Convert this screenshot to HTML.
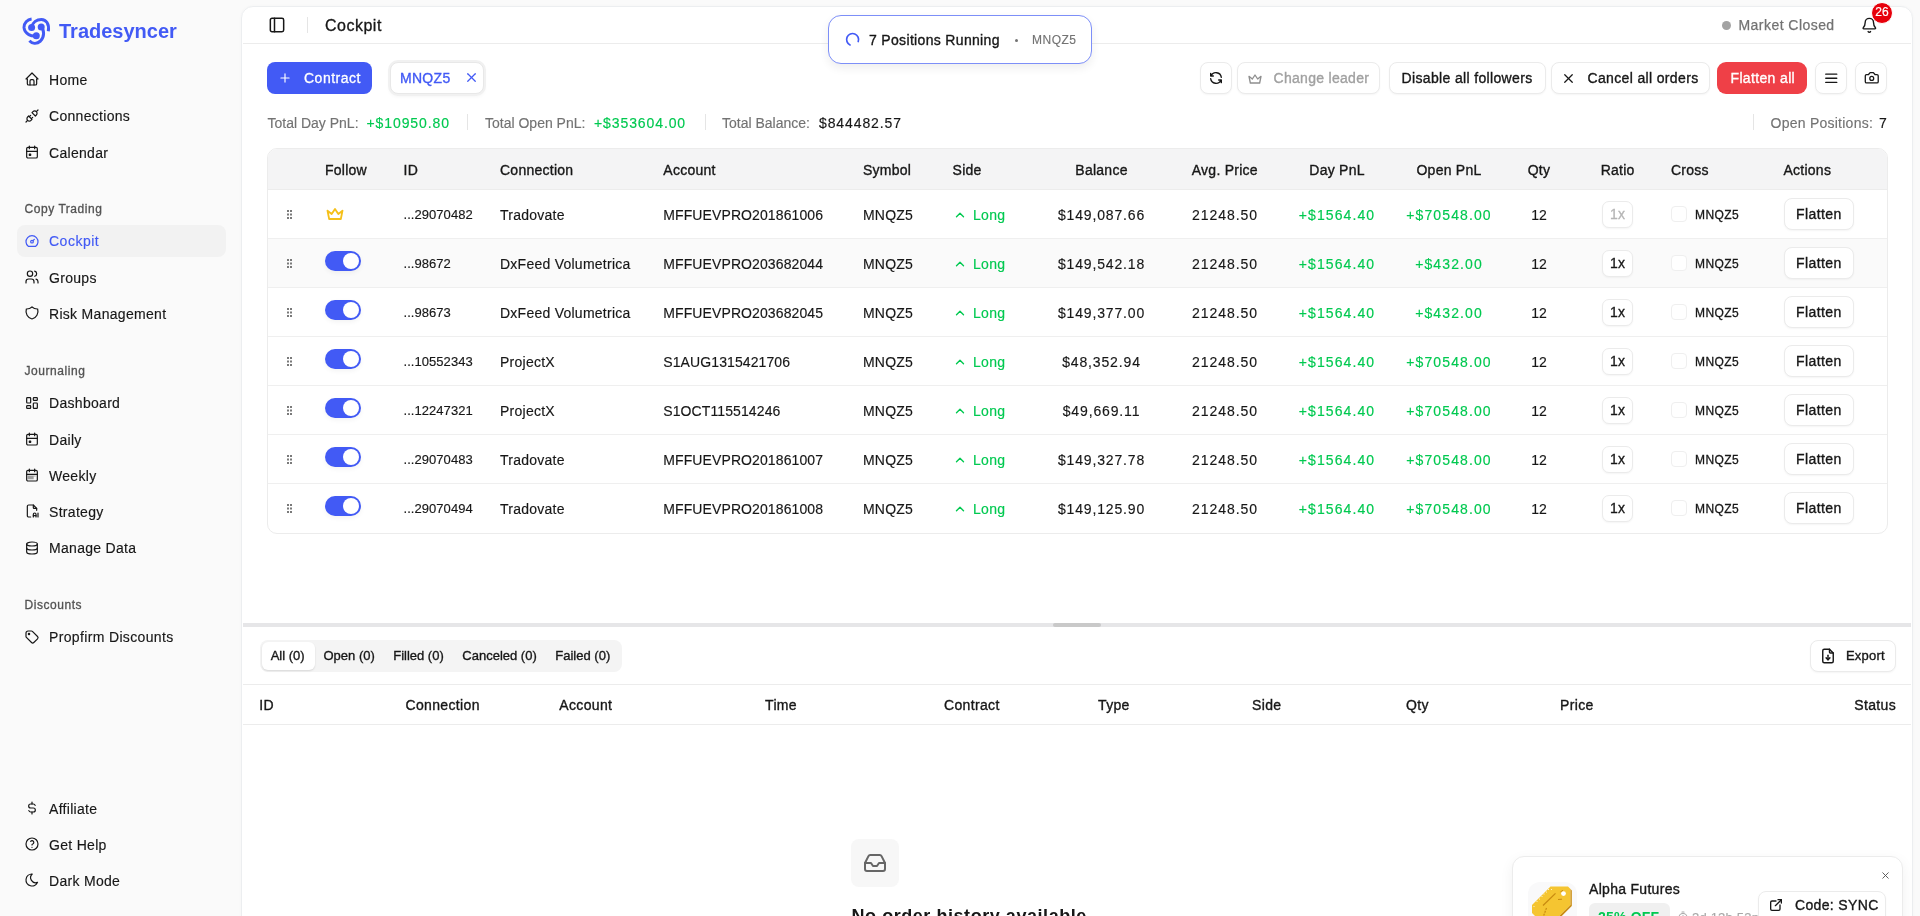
<!DOCTYPE html><html><head><meta charset="utf-8"><title>Cockpit</title><style>
*{box-sizing:border-box;margin:0;padding:0}
html,body{width:1920px;height:916px;overflow:hidden;background:#fafafa;font-family:"Liberation Sans",sans-serif;color:#171717}
.ab{position:absolute}
.t{white-space:nowrap;}
.ab svg{display:block}
.btn{position:absolute;background:#fff;border:1px solid #ebebeb;border-radius:8px;box-shadow:0 1px 2px rgba(0,0,0,0.045)}
.med{-webkit-text-stroke:0.25px currentColor}
</style></head><body><div style="position:absolute;left:0;top:0;width:1920px;height:916px;overflow:hidden;will-change:transform">
<div class="ab" style="left:18px;top:14px;width:36px;height:36px"><svg width="36" height="36" viewBox="0 0 36 36" fill="none" stroke="#425af5" stroke-width="3" stroke-linecap="butt"><path d="M18.3 21.8 C 14 22.6, 6.6 20.5, 6 13.4 C 5.8 9, 9.5 5.3, 13.6 4.9"/><path d="M13.6 13.4 C 14.5 8, 19 5.4, 23.4 5.4 C 28 5.5, 31.5 9.5, 30.3 17.3"/><path d="M23.2 13 C 26.5 16, 26.5 23, 22.5 27 C 18.5 30.5, 14 29.5, 11.4 26.7"/><circle cx="13.6" cy="13.4" r="3.5" fill="#425af5" stroke="none"/><circle cx="23.2" cy="13" r="3.5" fill="#425af5" stroke="none"/><circle cx="18.3" cy="21.8" r="3.5" fill="#425af5" stroke="none"/></svg></div>
<div class="ab t " style="left:59px;top:21.0px;font-size:20px;line-height:20px;color:#425af5;font-weight:700;">Tradesyncer</div>
<div class="ab" style="left:24px;top:71.2px;width:16px;height:16px;color:#171717"><svg width="16" height="16" viewBox="0 0 24 24" fill="none" stroke="currentColor" stroke-width="1.8" stroke-linecap="round" stroke-linejoin="round" ><path d="M5 12l-2 0l9 -9l9 9l-2 0"/><path d="M5 12v7a2 2 0 0 0 2 2h10a2 2 0 0 0 2 -2v-7"/><path d="M9 21v-6a2 2 0 0 1 2 -2h2a2 2 0 0 1 2 2v6"/></svg></div>
<div class="ab t " style="left:49px;top:69.7px;font-size:14px;line-height:20px;color:#171717;letter-spacing:0.3px;-webkit-text-stroke:0.15px currentColor;">Home</div>
<div class="ab" style="left:24px;top:107.8px;width:16px;height:16px;color:#171717"><svg width="16" height="16" viewBox="0 0 24 24" fill="none" stroke="currentColor" stroke-width="1.8" stroke-linecap="round" stroke-linejoin="round" ><path d="M7 12l5 5l-1.5 1.5a3.536 3.536 0 1 1 -5 -5l1.5 -1.5z"/><path d="M17 12l-5 -5l1.5 -1.5a3.536 3.536 0 1 1 5 5l-1.5 1.5z"/><path d="M3 21l2.5 -2.5"/><path d="M18.5 5.5l2.5 -2.5"/><path d="M10 11l-2 2"/><path d="M13 14l-2 2"/></svg></div>
<div class="ab t " style="left:49px;top:106.3px;font-size:14px;line-height:20px;color:#171717;letter-spacing:0.3px;-webkit-text-stroke:0.15px currentColor;">Connections</div>
<div class="ab" style="left:24px;top:144.1px;width:16px;height:16px;color:#171717"><svg width="16" height="16" viewBox="0 0 24 24" fill="none" stroke="currentColor" stroke-width="1.8" stroke-linecap="round" stroke-linejoin="round" ><path d="M4 7a2 2 0 0 1 2 -2h12a2 2 0 0 1 2 2v12a2 2 0 0 1 -2 2h-12a2 2 0 0 1 -2 -2z"/><path d="M16 3l0 4"/><path d="M8 3l0 4"/><path d="M4 11l16 0"/><path d="M8 15h2v2h-2z"/></svg></div>
<div class="ab t " style="left:49px;top:142.6px;font-size:14px;line-height:20px;color:#171717;letter-spacing:0.3px;-webkit-text-stroke:0.15px currentColor;">Calendar</div>
<div class="ab t " style="left:24.5px;top:198.75px;font-size:12px;line-height:20px;color:#525252;letter-spacing:0.55px;-webkit-text-stroke:0.3px currentColor;">Copy Trading</div>
<div class="ab" style="left:17px;top:225px;width:209px;height:32px;background:#f2f2f2;border-radius:8px"></div>
<div class="ab" style="left:24px;top:232.75px;width:16px;height:16px;color:#425af5"><svg width="16" height="16" viewBox="0 0 24 24" fill="none" stroke="currentColor" stroke-width="1.8" stroke-linecap="round" stroke-linejoin="round" ><path d="M12 13m-2 0a2 2 0 1 0 4 0a2 2 0 1 0 -4 0"/><path d="M13.45 11.55l2.05 -2.05"/><path d="M6.4 20a9 9 0 1 1 11.2 0z"/></svg></div>
<div class="ab t " style="left:49px;top:231.25px;font-size:14px;line-height:20px;color:#425af5;letter-spacing:0.5px;-webkit-text-stroke:0.15px currentColor;">Cockpit</div>
<div class="ab" style="left:24px;top:269.2px;width:16px;height:16px;color:#171717"><svg width="16" height="16" viewBox="0 0 24 24" fill="none" stroke="currentColor" stroke-width="1.8" stroke-linecap="round" stroke-linejoin="round" ><path d="M9 7m-4 0a4 4 0 1 0 8 0a4 4 0 1 0 -8 0"/><path d="M3 21v-2a4 4 0 0 1 4 -4h4a4 4 0 0 1 4 4v2"/><path d="M16 3.13a4 4 0 0 1 0 7.75"/><path d="M21 21v-2a4 4 0 0 0 -3 -3.85"/></svg></div>
<div class="ab t " style="left:49px;top:267.7px;font-size:14px;line-height:20px;color:#171717;letter-spacing:0.3px;-webkit-text-stroke:0.15px currentColor;">Groups</div>
<div class="ab" style="left:24px;top:305.4px;width:16px;height:16px;color:#171717"><svg width="16" height="16" viewBox="0 0 24 24" fill="none" stroke="currentColor" stroke-width="1.8" stroke-linecap="round" stroke-linejoin="round" ><path d="M12 3a12 12 0 0 0 8.5 3a12 12 0 0 1 -8.5 15a12 12 0 0 1 -8.5 -15a12 12 0 0 0 8.5 -3"/></svg></div>
<div class="ab t " style="left:49px;top:303.9px;font-size:14px;line-height:20px;color:#171717;letter-spacing:0.3px;-webkit-text-stroke:0.15px currentColor;">Risk Management</div>
<div class="ab t " style="left:24.5px;top:360.5px;font-size:12px;line-height:20px;color:#525252;letter-spacing:0.55px;-webkit-text-stroke:0.3px currentColor;">Journaling</div>
<div class="ab" style="left:24px;top:394.7px;width:16px;height:16px;color:#171717"><svg width="16" height="16" viewBox="0 0 24 24" fill="none" stroke="currentColor" stroke-width="1.8" stroke-linecap="round" stroke-linejoin="round" ><path d="M5 4h4a1 1 0 0 1 1 1v6a1 1 0 0 1 -1 1h-4a1 1 0 0 1 -1 -1v-6a1 1 0 0 1 1 -1"/><path d="M5 16h4a1 1 0 0 1 1 1v2a1 1 0 0 1 -1 1h-4a1 1 0 0 1 -1 -1v-2a1 1 0 0 1 1 -1"/><path d="M15 12h4a1 1 0 0 1 1 1v6a1 1 0 0 1 -1 1h-4a1 1 0 0 1 -1 -1v-6a1 1 0 0 1 1 -1"/><path d="M15 4h4a1 1 0 0 1 1 1v2a1 1 0 0 1 -1 1h-4a1 1 0 0 1 -1 -1v-2a1 1 0 0 1 1 -1"/></svg></div>
<div class="ab t " style="left:49px;top:393.2px;font-size:14px;line-height:20px;color:#171717;letter-spacing:0.3px;-webkit-text-stroke:0.15px currentColor;">Dashboard</div>
<div class="ab" style="left:24px;top:431.0px;width:16px;height:16px;color:#171717"><svg width="16" height="16" viewBox="0 0 24 24" fill="none" stroke="currentColor" stroke-width="1.8" stroke-linecap="round" stroke-linejoin="round" ><path d="M4 7a2 2 0 0 1 2 -2h12a2 2 0 0 1 2 2v12a2 2 0 0 1 -2 2h-12a2 2 0 0 1 -2 -2z"/><path d="M16 3l0 4"/><path d="M8 3l0 4"/><path d="M4 11l16 0"/><path d="M8 15h2v2h-2z"/></svg></div>
<div class="ab t " style="left:49px;top:429.5px;font-size:14px;line-height:20px;color:#171717;letter-spacing:0.3px;-webkit-text-stroke:0.15px currentColor;">Daily</div>
<div class="ab" style="left:24px;top:467.0px;width:16px;height:16px;color:#171717"><svg width="16" height="16" viewBox="0 0 24 24" fill="none" stroke="currentColor" stroke-width="1.8" stroke-linecap="round" stroke-linejoin="round" ><path d="M4 7a2 2 0 0 1 2 -2h12a2 2 0 0 1 2 2v12a2 2 0 0 1 -2 2h-12a2 2 0 0 1 -2 -2z"/><path d="M16 3v4"/><path d="M8 3v4"/><path d="M4 11h16"/><rect x="5.5" y="12.8" width="9" height="5.6" fill="currentColor" stroke="none" opacity="0.4"/><rect x="14.5" y="12.8" width="3" height="1.6" fill="currentColor" stroke="none" opacity="0.3"/></svg></div>
<div class="ab t " style="left:49px;top:465.5px;font-size:14px;line-height:20px;color:#171717;letter-spacing:0.3px;-webkit-text-stroke:0.15px currentColor;">Weekly</div>
<div class="ab" style="left:24px;top:503.2px;width:16px;height:16px;color:#171717"><svg width="16" height="16" viewBox="0 0 24 24" fill="none" stroke="currentColor" stroke-width="1.8" stroke-linecap="round" stroke-linejoin="round" ><path d="M14 3v4a1 1 0 0 0 1 1h4"/><path d="M10 21h-3a2 2 0 0 1 -2 -2v-14a2 2 0 0 1 2 -2h7l5 5v3"/><path d="M14 21v-4a2 2 0 1 1 4 0v4"/><path d="M14 19h4"/><path d="M21 15v6"/></svg></div>
<div class="ab t " style="left:49px;top:501.7px;font-size:14px;line-height:20px;color:#171717;letter-spacing:0.3px;-webkit-text-stroke:0.15px currentColor;">Strategy</div>
<div class="ab" style="left:24px;top:539.6px;width:16px;height:16px;color:#171717"><svg width="16" height="16" viewBox="0 0 24 24" fill="none" stroke="currentColor" stroke-width="1.8" stroke-linecap="round" stroke-linejoin="round" ><path d="M12 6m-8 0a8 3 0 1 0 16 0a8 3 0 1 0 -16 0"/><path d="M4 6v6a8 3 0 0 0 16 0v-6"/><path d="M4 12v6a8 3 0 0 0 16 0v-6"/></svg></div>
<div class="ab t " style="left:49px;top:538.1px;font-size:14px;line-height:20px;color:#171717;letter-spacing:0.3px;-webkit-text-stroke:0.15px currentColor;">Manage Data</div>
<div class="ab t " style="left:24.5px;top:594.5px;font-size:12px;line-height:20px;color:#525252;letter-spacing:0.55px;-webkit-text-stroke:0.3px currentColor;">Discounts</div>
<div class="ab" style="left:24px;top:628.5px;width:16px;height:16px;color:#171717"><svg width="16" height="16" viewBox="0 0 24 24" fill="none" stroke="currentColor" stroke-width="1.8" stroke-linecap="round" stroke-linejoin="round" ><path d="M7.5 7.5m-1 0a1 1 0 1 0 2 0a1 1 0 1 0 -2 0"/><path d="M3 6v5.172a2 2 0 0 0 .586 1.414l7.71 7.71a2.41 2.41 0 0 0 3.408 0l5.592 -5.592a2.41 2.41 0 0 0 0 -3.408l-7.71 -7.71a2 2 0 0 0 -1.414 -.586h-5.172a3 3 0 0 0 -3 3z"/></svg></div>
<div class="ab t " style="left:49px;top:627.0px;font-size:14px;line-height:20px;color:#171717;letter-spacing:0.35px;-webkit-text-stroke:0.15px currentColor;">Propfirm Discounts</div>
<div class="ab" style="left:24px;top:800.1px;width:16px;height:16px;color:#171717"><svg width="16" height="16" viewBox="0 0 24 24" fill="none" stroke="currentColor" stroke-width="1.8" stroke-linecap="round" stroke-linejoin="round" ><path d="M16.7 8a3 3 0 0 0 -2.7 -2h-4a3 3 0 0 0 0 6h4a3 3 0 0 1 0 6h-4a3 3 0 0 1 -2.7 -2"/><path d="M12 3v3m0 12v3"/></svg></div>
<div class="ab t " style="left:49px;top:798.6px;font-size:14px;line-height:20px;color:#171717;letter-spacing:0.3px;-webkit-text-stroke:0.15px currentColor;">Affiliate</div>
<div class="ab" style="left:24px;top:836.1px;width:16px;height:16px;color:#171717"><svg width="16" height="16" viewBox="0 0 24 24" fill="none" stroke="currentColor" stroke-width="1.8" stroke-linecap="round" stroke-linejoin="round" ><path d="M12 12m-9 0a9 9 0 1 0 18 0a9 9 0 1 0 -18 0"/><path d="M12 17l0 .01"/><path d="M12 13.5a1.5 1.5 0 0 1 1 -1.5a2.6 2.6 0 1 0 -3 -4"/></svg></div>
<div class="ab t " style="left:49px;top:834.6px;font-size:14px;line-height:20px;color:#171717;letter-spacing:0.3px;-webkit-text-stroke:0.15px currentColor;">Get Help</div>
<div class="ab" style="left:24px;top:872.2px;width:16px;height:16px;color:#171717"><svg width="16" height="16" viewBox="0 0 24 24" fill="none" stroke="currentColor" stroke-width="1.8" stroke-linecap="round" stroke-linejoin="round" ><path d="M12 3c.132 0 .263 0 .393 0a7.5 7.5 0 0 0 7.92 12.446a9 9 0 1 1 -8.313 -12.454z"/></svg></div>
<div class="ab t " style="left:49px;top:870.7px;font-size:14px;line-height:20px;color:#171717;letter-spacing:0.3px;-webkit-text-stroke:0.15px currentColor;">Dark Mode</div>
<div class="ab" style="left:241px;top:6px;width:1672px;height:940px;background:#fff;border:1px solid #eceef0;border-radius:12px;box-shadow:0 0 3px rgba(0,0,0,0.03)"></div>
<div class="ab" style="left:243px;top:43px;width:1668px;height:1px;background:#ececec"></div>
<div class="ab" style="left:267px;top:14.7px;width:20px;height:20px;color:#171717"><svg width="20" height="20" viewBox="0 0 24 24" fill="none" stroke="currentColor" stroke-width="1.8" stroke-linecap="round" stroke-linejoin="round" ><path d="M4 6a2 2 0 0 1 2 -2h12a2 2 0 0 1 2 2v12a2 2 0 0 1 -2 2h-12a2 2 0 0 1 -2 -2z"/><path d="M9 4l0 16"/></svg></div>
<div class="ab" style="left:307px;top:17px;width:1px;height:16px;background:#e5e5e5"></div>
<div class="ab t " style="left:325px;top:16.0px;font-size:16px;line-height:20px;color:#171717;letter-spacing:0.5px;-webkit-text-stroke:0.3px currentColor;">Cockpit</div>
<div class="ab" style="left:1722px;top:21px;width:9px;height:9px;border-radius:50%;background:#a3a3a3"></div>
<div class="ab t " style="left:1738.5px;top:15.3px;font-size:14px;line-height:20px;color:#737373;letter-spacing:0.45px;-webkit-text-stroke:0.25px currentColor;">Market Closed</div>
<div class="ab" style="left:1861.3px;top:16.7px;width:16.7px;height:16.7px;color:#171717"><svg width="16.7" height="16.7" viewBox="0 0 24 24" fill="none" stroke="currentColor" stroke-width="2" stroke-linecap="round" stroke-linejoin="round" ><path d="M10.268 21a2 2 0 0 0 3.464 0"/><path d="M3.262 15.326A1 1 0 0 0 4 17h16a1 1 0 0 0 .74-1.673C19.41 13.956 18 12.499 18 8A6 6 0 0 0 6 8c0 4.499-1.411 5.956-2.738 7.326"/></svg></div>
<div class="ab" style="left:1871px;top:2px;width:22px;height:22px;border-radius:50%;background:#e7000b;border:1px solid #fff;color:#fff;font-size:12px;line-height:18px;text-align:center;-webkit-text-stroke:0.2px #fff">26</div>
<div class="ab" style="left:267px;top:62px;width:105px;height:32px;background:#425af5;border-radius:8px"></div>
<div class="ab" style="left:278px;top:71px;width:14px;height:14px;color:#fff"><svg width="14" height="14" viewBox="0 0 24 24" fill="none" stroke="currentColor" stroke-width="2" stroke-linecap="round" stroke-linejoin="round" ><path d="M12 5l0 14"/><path d="M5 12l14 0"/></svg></div>
<div class="ab t " style="left:304px;top:68.0px;font-size:14px;line-height:20px;color:#fff;letter-spacing:0.5px;-webkit-text-stroke:0.3px currentColor;">Contract</div>
<div class="btn" style="left:390px;top:62px;width:94px;height:32px;border-color:#e8e8e8;box-shadow:0 0 0 2px #f1f1f1, 0 2px 4px rgba(0,0,0,0.06)"></div>
<div class="ab t " style="left:400px;top:68.0px;font-size:14px;line-height:20px;color:#425af5;letter-spacing:0.3px;-webkit-text-stroke:0.35px currentColor;">MNQZ5</div>
<div class="ab" style="left:464px;top:70px;width:15px;height:15px;color:#425af5"><svg width="15" height="15" viewBox="0 0 24 24" fill="none" stroke="currentColor" stroke-width="2" stroke-linecap="round" stroke-linejoin="round" ><path d="M18 6l-12 12"/><path d="M6 6l12 12"/></svg></div>
<div class="btn" style="left:1200px;top:62px;width:32px;height:32px"></div>
<div class="ab" style="left:1208px;top:70px;width:16px;height:16px;color:#171717"><svg width="16" height="16" viewBox="0 0 24 24" fill="none" stroke="currentColor" stroke-width="2" stroke-linecap="round" stroke-linejoin="round" ><path d="M20 11a8.1 8.1 0 0 0 -15.5 -2m-.5 -4v4h4"/><path d="M4 13a8.1 8.1 0 0 0 15.5 2m.5 4v-4h-4"/></svg></div>
<div class="btn" style="left:1237px;top:62px;width:143px;height:32px"></div>
<div class="ab" style="left:1247.1px;top:71.4px;width:16px;height:16px;color:#8f8f8f"><svg width="16" height="16" viewBox="0 0 24 24" fill="none" stroke="currentColor" stroke-width="2" stroke-linecap="round" stroke-linejoin="round" ><path d="M12 6l4 6l5 -4l-2 10h-14l-2 -10l5 4z"/></svg></div>
<div class="ab t " style="left:1273.5px;top:68.0px;font-size:14px;line-height:20px;color:#a1a1a1;letter-spacing:0.3px;-webkit-text-stroke:0.35px currentColor;">Change leader</div>
<div class="btn" style="left:1389px;top:62px;width:157px;height:32px"></div>
<div class="ab t " style="left:1401.5px;top:68.0px;font-size:14px;line-height:20px;color:#171717;letter-spacing:0.35px;-webkit-text-stroke:0.35px currentColor;">Disable all followers</div>
<div class="btn" style="left:1551px;top:62px;width:159px;height:32px"></div>
<div class="ab" style="left:1561px;top:71px;width:15px;height:15px;color:#171717"><svg width="15" height="15" viewBox="0 0 24 24" fill="none" stroke="currentColor" stroke-width="2" stroke-linecap="round" stroke-linejoin="round" ><path d="M18 6l-12 12"/><path d="M6 6l12 12"/></svg></div>
<div class="ab t " style="left:1587.5px;top:68.0px;font-size:14px;line-height:20px;color:#171717;letter-spacing:0.35px;-webkit-text-stroke:0.35px currentColor;">Cancel all orders</div>
<div class="ab" style="left:1717px;top:62px;width:90px;height:32px;background:#ef4047;border-radius:9px"></div>
<div class="ab t " style="left:1730.5px;top:68.0px;font-size:14px;line-height:20px;color:#fff;letter-spacing:0.35px;-webkit-text-stroke:0.35px currentColor;">Flatten all</div>
<div class="btn" style="left:1815px;top:62px;width:32px;height:32px"></div>
<div class="ab" style="left:1822.7px;top:69.9px;width:16.5px;height:16.5px;color:#171717"><svg width="16.5" height="16.5" viewBox="0 0 24 24" fill="none" stroke="currentColor" stroke-width="2" stroke-linecap="round" stroke-linejoin="round" ><path d="M4 6l16 0"/><path d="M4 12l16 0"/><path d="M4 18l16 0"/></svg></div>
<div class="btn" style="left:1855px;top:62px;width:32px;height:32px"></div>
<div class="ab" style="left:1863.75px;top:70.1px;width:15.5px;height:15.5px;color:#171717"><svg width="15.5" height="15.5" viewBox="0 0 24 24" fill="none" stroke="currentColor" stroke-width="2" stroke-linecap="round" stroke-linejoin="round" ><path d="M14.5 4h-5L7 7H4a2 2 0 0 0-2 2v9a2 2 0 0 0 2 2h16a2 2 0 0 0 2-2V9a2 2 0 0 0-2-2h-3l-2.5-3z"/><path d="M12 13m-3 0a3 3 0 1 0 6 0a3 3 0 1 0 -6 0"/></svg></div>
<div class="ab t " style="left:267.5px;top:112.9px;font-size:14px;line-height:20px;color:#737373;-webkit-text-stroke:0.15px currentColor;">Total Day PnL:</div>
<div class="ab t " style="left:366.5px;top:112.9px;font-size:14px;line-height:20px;color:#00c950;letter-spacing:0.9px;-webkit-text-stroke:0.15px currentColor;">+$10950.80</div>
<div class="ab" style="left:467px;top:114px;width:1px;height:16px;background:#e5e5e5"></div>
<div class="ab t " style="left:485px;top:112.9px;font-size:14px;line-height:20px;color:#737373;-webkit-text-stroke:0.15px currentColor;">Total Open PnL:</div>
<div class="ab t " style="left:594px;top:112.9px;font-size:14px;line-height:20px;color:#00c950;letter-spacing:0.9px;-webkit-text-stroke:0.15px currentColor;">+$353604.00</div>
<div class="ab" style="left:705px;top:114px;width:1px;height:16px;background:#e5e5e5"></div>
<div class="ab t " style="left:722px;top:112.9px;font-size:14px;line-height:20px;color:#737373;-webkit-text-stroke:0.15px currentColor;">Total Balance:</div>
<div class="ab t " style="left:819px;top:112.9px;font-size:14px;line-height:20px;color:#171717;letter-spacing:0.9px;-webkit-text-stroke:0.15px currentColor;">$844482.57</div>
<div class="ab" style="left:1753px;top:114px;width:1px;height:16px;background:#e5e5e5"></div>
<div class="ab t " style="left:1770.5px;top:112.9px;font-size:14px;line-height:20px;color:#737373;letter-spacing:0.25px;-webkit-text-stroke:0.15px currentColor;">Open Positions:</div>
<div class="ab t " style="left:1879px;top:112.9px;font-size:14px;line-height:20px;color:#171717;-webkit-text-stroke:0.15px currentColor;">7</div>
<div class="ab" style="left:267px;top:148px;width:1621px;height:386px;border:1px solid #ececec;border-radius:10px;overflow:hidden;background:#fff"><div class="ab" style="left:0;top:0;width:100%;height:41px;background:#f4f4f5;border-bottom:1px solid #ececec"></div><div class="ab" style="left:0;top:90px;width:100%;height:49px;background:#fafafa"></div><div class="ab" style="left:0;top:89px;width:100%;height:1px;background:#efefef"></div><div class="ab" style="left:0;top:138px;width:100%;height:1px;background:#efefef"></div><div class="ab" style="left:0;top:187px;width:100%;height:1px;background:#efefef"></div><div class="ab" style="left:0;top:236px;width:100%;height:1px;background:#efefef"></div><div class="ab" style="left:0;top:285px;width:100%;height:1px;background:#efefef"></div><div class="ab" style="left:0;top:334px;width:100%;height:1px;background:#efefef"></div></div>
<div class="ab t " style="left:325px;top:159.5px;font-size:14px;line-height:20px;color:#171717;letter-spacing:0.25px;-webkit-text-stroke:0.35px currentColor;">Follow</div>
<div class="ab t " style="left:403.5px;top:159.5px;font-size:14px;line-height:20px;color:#171717;letter-spacing:0.25px;-webkit-text-stroke:0.35px currentColor;">ID</div>
<div class="ab t " style="left:500px;top:159.5px;font-size:14px;line-height:20px;color:#171717;letter-spacing:0.25px;-webkit-text-stroke:0.35px currentColor;">Connection</div>
<div class="ab t " style="left:663.3px;top:159.5px;font-size:14px;line-height:20px;color:#171717;letter-spacing:0.25px;-webkit-text-stroke:0.35px currentColor;">Account</div>
<div class="ab t " style="left:863px;top:159.5px;font-size:14px;line-height:20px;color:#171717;letter-spacing:0.25px;-webkit-text-stroke:0.35px currentColor;">Symbol</div>
<div class="ab t " style="left:952.6px;top:159.5px;font-size:14px;line-height:20px;color:#171717;letter-spacing:0.25px;-webkit-text-stroke:0.35px currentColor;">Side</div>
<div class="ab t " style="left:801.5px;width:600px;text-align:center;top:159.5px;font-size:14px;line-height:20px;color:#171717;letter-spacing:0.25px;-webkit-text-stroke:0.35px currentColor;">Balance</div>
<div class="ab t " style="left:924.8px;width:600px;text-align:center;top:159.5px;font-size:14px;line-height:20px;color:#171717;letter-spacing:0.25px;-webkit-text-stroke:0.35px currentColor;">Avg. Price</div>
<div class="ab t " style="left:1037px;width:600px;text-align:center;top:159.5px;font-size:14px;line-height:20px;color:#171717;letter-spacing:0.25px;-webkit-text-stroke:0.35px currentColor;">Day PnL</div>
<div class="ab t " style="left:1149px;width:600px;text-align:center;top:159.5px;font-size:14px;line-height:20px;color:#171717;letter-spacing:0.25px;-webkit-text-stroke:0.35px currentColor;">Open PnL</div>
<div class="ab t " style="left:1239px;width:600px;text-align:center;top:159.5px;font-size:14px;line-height:20px;color:#171717;letter-spacing:0.25px;-webkit-text-stroke:0.35px currentColor;">Qty</div>
<div class="ab t " style="left:1317.6px;width:600px;text-align:center;top:159.5px;font-size:14px;line-height:20px;color:#171717;letter-spacing:0.25px;-webkit-text-stroke:0.35px currentColor;">Ratio</div>
<div class="ab t " style="left:1671px;top:159.5px;font-size:14px;line-height:20px;color:#171717;letter-spacing:0.25px;-webkit-text-stroke:0.35px currentColor;">Cross</div>
<div class="ab t " style="left:1783.5px;top:159.5px;font-size:14px;line-height:20px;color:#171717;letter-spacing:0.25px;-webkit-text-stroke:0.35px currentColor;">Actions</div>
<div class="ab" style="left:287px;top:210.00px;width:5px;height:10px"><svg width="5" height="10" viewBox="0 0 5 10" fill="#7a7a7a"><rect x="0" y="0" width="2" height="2"/><rect x="3" y="0" width="2" height="2"/><rect x="0" y="3.5" width="2" height="2"/><rect x="3" y="3.5" width="2" height="2"/><rect x="0" y="7" width="2" height="2"/><rect x="3" y="7" width="2" height="2"/></svg></div>
<div class="ab" style="left:325.3px;top:204.20000000000002px;width:20px;height:20px;color:#f5c01a"><svg width="20" height="20" viewBox="0 0 24 24" fill="none" stroke="currentColor" stroke-width="2.2" stroke-linecap="round" stroke-linejoin="round" ><path d="M12 6l4 6l5 -4l-2 10h-14l-2 -10l5 4z"/></svg></div>
<div class="ab t " style="left:403.5px;top:204.70000000000002px;font-size:13px;line-height:20px;color:#171717;letter-spacing:0.05px;-webkit-text-stroke:0.15px currentColor;">...29070482</div>
<div class="ab t " style="left:500px;top:204.70000000000002px;font-size:14px;line-height:20px;color:#171717;letter-spacing:0.25px;-webkit-text-stroke:0.15px currentColor;">Tradovate</div>
<div class="ab t " style="left:663.3px;top:204.70000000000002px;font-size:14px;line-height:20px;color:#171717;letter-spacing:0.1px;-webkit-text-stroke:0.15px currentColor;">MFFUEVPRO201861006</div>
<div class="ab t " style="left:863px;top:204.70000000000002px;font-size:14px;line-height:20px;color:#171717;letter-spacing:0.2px;-webkit-text-stroke:0.15px currentColor;">MNQZ5</div>
<div class="ab" style="left:953px;top:208.0px;width:14px;height:14px;color:#00c950"><svg width="14" height="14" viewBox="0 0 24 24" fill="none" stroke="currentColor" stroke-width="2.4" stroke-linecap="round" stroke-linejoin="round" ><path d="M6 15l6 -6l6 6"/></svg></div>
<div class="ab t " style="left:973px;top:204.70000000000002px;font-size:14px;line-height:20px;color:#00c950;letter-spacing:0.3px;-webkit-text-stroke:0.15px currentColor;">Long</div>
<div class="ab t " style="left:801.5px;width:600px;text-align:center;top:204.70000000000002px;font-size:14px;line-height:20px;color:#171717;letter-spacing:0.85px;-webkit-text-stroke:0.15px currentColor;">$149,087.66</div>
<div class="ab t " style="left:925px;width:600px;text-align:center;top:204.70000000000002px;font-size:14px;line-height:20px;color:#171717;letter-spacing:0.95px;-webkit-text-stroke:0.15px currentColor;">21248.50</div>
<div class="ab t " style="left:1037px;width:600px;text-align:center;top:204.70000000000002px;font-size:14px;line-height:20px;color:#00c950;letter-spacing:1.1px;-webkit-text-stroke:0.15px currentColor;">+$1564.40</div>
<div class="ab t " style="left:1149px;width:600px;text-align:center;top:204.70000000000002px;font-size:14px;line-height:20px;color:#00c950;letter-spacing:1.1px;-webkit-text-stroke:0.15px currentColor;">+$70548.00</div>
<div class="ab t " style="left:1239px;width:600px;text-align:center;top:204.70000000000002px;font-size:14px;line-height:20px;color:#171717;-webkit-text-stroke:0.15px currentColor;">12</div>
<div class="btn" style="left:1602px;top:201px;width:31px;height:27px;border-radius:7px"></div>
<div class="ab t " style="left:1317.5px;width:600px;text-align:center;top:204.3px;font-size:14px;line-height:20px;color:#b5b5b5;-webkit-text-stroke:0.3px currentColor;">1x</div>
<div class="ab" style="left:1671px;top:206px;width:16px;height:16px;border:1px solid #efefef;border-radius:4px;background:#fff"></div>
<div class="ab t " style="left:1695px;top:205.3px;font-size:12px;line-height:20px;color:#171717;letter-spacing:0.4px;-webkit-text-stroke:0.3px currentColor;">MNQZ5</div>
<div class="btn" style="left:1783.5px;top:198px;width:70px;height:32px"></div>
<div class="ab t " style="left:1796px;top:204.3px;font-size:14px;line-height:20px;color:#171717;letter-spacing:0.4px;-webkit-text-stroke:0.35px currentColor;">Flatten</div>
<div class="ab" style="left:287px;top:259.00px;width:5px;height:10px"><svg width="5" height="10" viewBox="0 0 5 10" fill="#7a7a7a"><rect x="0" y="0" width="2" height="2"/><rect x="3" y="0" width="2" height="2"/><rect x="0" y="3.5" width="2" height="2"/><rect x="3" y="3.5" width="2" height="2"/><rect x="0" y="7" width="2" height="2"/><rect x="3" y="7" width="2" height="2"/></svg></div>
<div class="ab" style="left:325px;top:251.3px;width:36px;height:20px;border-radius:10px;background:#425af5;box-shadow:0 2px 5px rgba(0,0,0,0.05)"></div>
<div class="ab" style="left:342.5px;top:253.0px;width:16px;height:16px;border-radius:50%;background:#fff"></div>
<div class="ab t " style="left:403.5px;top:253.7px;font-size:13px;line-height:20px;color:#171717;letter-spacing:0.05px;-webkit-text-stroke:0.15px currentColor;">...98672</div>
<div class="ab t " style="left:500px;top:253.7px;font-size:14px;line-height:20px;color:#171717;letter-spacing:0.25px;-webkit-text-stroke:0.15px currentColor;">DxFeed Volumetrica</div>
<div class="ab t " style="left:663.3px;top:253.7px;font-size:14px;line-height:20px;color:#171717;letter-spacing:0.1px;-webkit-text-stroke:0.15px currentColor;">MFFUEVPRO203682044</div>
<div class="ab t " style="left:863px;top:253.7px;font-size:14px;line-height:20px;color:#171717;letter-spacing:0.2px;-webkit-text-stroke:0.15px currentColor;">MNQZ5</div>
<div class="ab" style="left:953px;top:257.0px;width:14px;height:14px;color:#00c950"><svg width="14" height="14" viewBox="0 0 24 24" fill="none" stroke="currentColor" stroke-width="2.4" stroke-linecap="round" stroke-linejoin="round" ><path d="M6 15l6 -6l6 6"/></svg></div>
<div class="ab t " style="left:973px;top:253.7px;font-size:14px;line-height:20px;color:#00c950;letter-spacing:0.3px;-webkit-text-stroke:0.15px currentColor;">Long</div>
<div class="ab t " style="left:801.5px;width:600px;text-align:center;top:253.7px;font-size:14px;line-height:20px;color:#171717;letter-spacing:0.85px;-webkit-text-stroke:0.15px currentColor;">$149,542.18</div>
<div class="ab t " style="left:925px;width:600px;text-align:center;top:253.7px;font-size:14px;line-height:20px;color:#171717;letter-spacing:0.95px;-webkit-text-stroke:0.15px currentColor;">21248.50</div>
<div class="ab t " style="left:1037px;width:600px;text-align:center;top:253.7px;font-size:14px;line-height:20px;color:#00c950;letter-spacing:1.1px;-webkit-text-stroke:0.15px currentColor;">+$1564.40</div>
<div class="ab t " style="left:1149px;width:600px;text-align:center;top:253.7px;font-size:14px;line-height:20px;color:#00c950;letter-spacing:1.1px;-webkit-text-stroke:0.15px currentColor;">+$432.00</div>
<div class="ab t " style="left:1239px;width:600px;text-align:center;top:253.7px;font-size:14px;line-height:20px;color:#171717;-webkit-text-stroke:0.15px currentColor;">12</div>
<div class="btn" style="left:1602px;top:250px;width:31px;height:27px;border-radius:7px"></div>
<div class="ab t " style="left:1317.5px;width:600px;text-align:center;top:253.3px;font-size:14px;line-height:20px;color:#171717;-webkit-text-stroke:0.3px currentColor;">1x</div>
<div class="ab" style="left:1671px;top:255px;width:16px;height:16px;border:1px solid #efefef;border-radius:4px;background:#fff"></div>
<div class="ab t " style="left:1695px;top:254.3px;font-size:12px;line-height:20px;color:#171717;letter-spacing:0.4px;-webkit-text-stroke:0.3px currentColor;">MNQZ5</div>
<div class="btn" style="left:1783.5px;top:247px;width:70px;height:32px"></div>
<div class="ab t " style="left:1796px;top:253.3px;font-size:14px;line-height:20px;color:#171717;letter-spacing:0.4px;-webkit-text-stroke:0.35px currentColor;">Flatten</div>
<div class="ab" style="left:287px;top:308.00px;width:5px;height:10px"><svg width="5" height="10" viewBox="0 0 5 10" fill="#7a7a7a"><rect x="0" y="0" width="2" height="2"/><rect x="3" y="0" width="2" height="2"/><rect x="0" y="3.5" width="2" height="2"/><rect x="3" y="3.5" width="2" height="2"/><rect x="0" y="7" width="2" height="2"/><rect x="3" y="7" width="2" height="2"/></svg></div>
<div class="ab" style="left:325px;top:300.3px;width:36px;height:20px;border-radius:10px;background:#425af5;box-shadow:0 2px 5px rgba(0,0,0,0.05)"></div>
<div class="ab" style="left:342.5px;top:302.0px;width:16px;height:16px;border-radius:50%;background:#fff"></div>
<div class="ab t " style="left:403.5px;top:302.7px;font-size:13px;line-height:20px;color:#171717;letter-spacing:0.05px;-webkit-text-stroke:0.15px currentColor;">...98673</div>
<div class="ab t " style="left:500px;top:302.7px;font-size:14px;line-height:20px;color:#171717;letter-spacing:0.25px;-webkit-text-stroke:0.15px currentColor;">DxFeed Volumetrica</div>
<div class="ab t " style="left:663.3px;top:302.7px;font-size:14px;line-height:20px;color:#171717;letter-spacing:0.1px;-webkit-text-stroke:0.15px currentColor;">MFFUEVPRO203682045</div>
<div class="ab t " style="left:863px;top:302.7px;font-size:14px;line-height:20px;color:#171717;letter-spacing:0.2px;-webkit-text-stroke:0.15px currentColor;">MNQZ5</div>
<div class="ab" style="left:953px;top:306.0px;width:14px;height:14px;color:#00c950"><svg width="14" height="14" viewBox="0 0 24 24" fill="none" stroke="currentColor" stroke-width="2.4" stroke-linecap="round" stroke-linejoin="round" ><path d="M6 15l6 -6l6 6"/></svg></div>
<div class="ab t " style="left:973px;top:302.7px;font-size:14px;line-height:20px;color:#00c950;letter-spacing:0.3px;-webkit-text-stroke:0.15px currentColor;">Long</div>
<div class="ab t " style="left:801.5px;width:600px;text-align:center;top:302.7px;font-size:14px;line-height:20px;color:#171717;letter-spacing:0.85px;-webkit-text-stroke:0.15px currentColor;">$149,377.00</div>
<div class="ab t " style="left:925px;width:600px;text-align:center;top:302.7px;font-size:14px;line-height:20px;color:#171717;letter-spacing:0.95px;-webkit-text-stroke:0.15px currentColor;">21248.50</div>
<div class="ab t " style="left:1037px;width:600px;text-align:center;top:302.7px;font-size:14px;line-height:20px;color:#00c950;letter-spacing:1.1px;-webkit-text-stroke:0.15px currentColor;">+$1564.40</div>
<div class="ab t " style="left:1149px;width:600px;text-align:center;top:302.7px;font-size:14px;line-height:20px;color:#00c950;letter-spacing:1.1px;-webkit-text-stroke:0.15px currentColor;">+$432.00</div>
<div class="ab t " style="left:1239px;width:600px;text-align:center;top:302.7px;font-size:14px;line-height:20px;color:#171717;-webkit-text-stroke:0.15px currentColor;">12</div>
<div class="btn" style="left:1602px;top:299px;width:31px;height:27px;border-radius:7px"></div>
<div class="ab t " style="left:1317.5px;width:600px;text-align:center;top:302.3px;font-size:14px;line-height:20px;color:#171717;-webkit-text-stroke:0.3px currentColor;">1x</div>
<div class="ab" style="left:1671px;top:304px;width:16px;height:16px;border:1px solid #efefef;border-radius:4px;background:#fff"></div>
<div class="ab t " style="left:1695px;top:303.3px;font-size:12px;line-height:20px;color:#171717;letter-spacing:0.4px;-webkit-text-stroke:0.3px currentColor;">MNQZ5</div>
<div class="btn" style="left:1783.5px;top:296px;width:70px;height:32px"></div>
<div class="ab t " style="left:1796px;top:302.3px;font-size:14px;line-height:20px;color:#171717;letter-spacing:0.4px;-webkit-text-stroke:0.35px currentColor;">Flatten</div>
<div class="ab" style="left:287px;top:357.00px;width:5px;height:10px"><svg width="5" height="10" viewBox="0 0 5 10" fill="#7a7a7a"><rect x="0" y="0" width="2" height="2"/><rect x="3" y="0" width="2" height="2"/><rect x="0" y="3.5" width="2" height="2"/><rect x="3" y="3.5" width="2" height="2"/><rect x="0" y="7" width="2" height="2"/><rect x="3" y="7" width="2" height="2"/></svg></div>
<div class="ab" style="left:325px;top:349.3px;width:36px;height:20px;border-radius:10px;background:#425af5;box-shadow:0 2px 5px rgba(0,0,0,0.05)"></div>
<div class="ab" style="left:342.5px;top:351.0px;width:16px;height:16px;border-radius:50%;background:#fff"></div>
<div class="ab t " style="left:403.5px;top:351.7px;font-size:13px;line-height:20px;color:#171717;letter-spacing:0.05px;-webkit-text-stroke:0.15px currentColor;">...10552343</div>
<div class="ab t " style="left:500px;top:351.7px;font-size:14px;line-height:20px;color:#171717;letter-spacing:0.25px;-webkit-text-stroke:0.15px currentColor;">ProjectX</div>
<div class="ab t " style="left:663.3px;top:351.7px;font-size:14px;line-height:20px;color:#171717;letter-spacing:0.1px;-webkit-text-stroke:0.15px currentColor;">S1AUG1315421706</div>
<div class="ab t " style="left:863px;top:351.7px;font-size:14px;line-height:20px;color:#171717;letter-spacing:0.2px;-webkit-text-stroke:0.15px currentColor;">MNQZ5</div>
<div class="ab" style="left:953px;top:355.0px;width:14px;height:14px;color:#00c950"><svg width="14" height="14" viewBox="0 0 24 24" fill="none" stroke="currentColor" stroke-width="2.4" stroke-linecap="round" stroke-linejoin="round" ><path d="M6 15l6 -6l6 6"/></svg></div>
<div class="ab t " style="left:973px;top:351.7px;font-size:14px;line-height:20px;color:#00c950;letter-spacing:0.3px;-webkit-text-stroke:0.15px currentColor;">Long</div>
<div class="ab t " style="left:801.5px;width:600px;text-align:center;top:351.7px;font-size:14px;line-height:20px;color:#171717;letter-spacing:0.85px;-webkit-text-stroke:0.15px currentColor;">$48,352.94</div>
<div class="ab t " style="left:925px;width:600px;text-align:center;top:351.7px;font-size:14px;line-height:20px;color:#171717;letter-spacing:0.95px;-webkit-text-stroke:0.15px currentColor;">21248.50</div>
<div class="ab t " style="left:1037px;width:600px;text-align:center;top:351.7px;font-size:14px;line-height:20px;color:#00c950;letter-spacing:1.1px;-webkit-text-stroke:0.15px currentColor;">+$1564.40</div>
<div class="ab t " style="left:1149px;width:600px;text-align:center;top:351.7px;font-size:14px;line-height:20px;color:#00c950;letter-spacing:1.1px;-webkit-text-stroke:0.15px currentColor;">+$70548.00</div>
<div class="ab t " style="left:1239px;width:600px;text-align:center;top:351.7px;font-size:14px;line-height:20px;color:#171717;-webkit-text-stroke:0.15px currentColor;">12</div>
<div class="btn" style="left:1602px;top:348px;width:31px;height:27px;border-radius:7px"></div>
<div class="ab t " style="left:1317.5px;width:600px;text-align:center;top:351.3px;font-size:14px;line-height:20px;color:#171717;-webkit-text-stroke:0.3px currentColor;">1x</div>
<div class="ab" style="left:1671px;top:353px;width:16px;height:16px;border:1px solid #efefef;border-radius:4px;background:#fff"></div>
<div class="ab t " style="left:1695px;top:352.3px;font-size:12px;line-height:20px;color:#171717;letter-spacing:0.4px;-webkit-text-stroke:0.3px currentColor;">MNQZ5</div>
<div class="btn" style="left:1783.5px;top:345px;width:70px;height:32px"></div>
<div class="ab t " style="left:1796px;top:351.3px;font-size:14px;line-height:20px;color:#171717;letter-spacing:0.4px;-webkit-text-stroke:0.35px currentColor;">Flatten</div>
<div class="ab" style="left:287px;top:406.00px;width:5px;height:10px"><svg width="5" height="10" viewBox="0 0 5 10" fill="#7a7a7a"><rect x="0" y="0" width="2" height="2"/><rect x="3" y="0" width="2" height="2"/><rect x="0" y="3.5" width="2" height="2"/><rect x="3" y="3.5" width="2" height="2"/><rect x="0" y="7" width="2" height="2"/><rect x="3" y="7" width="2" height="2"/></svg></div>
<div class="ab" style="left:325px;top:398.3px;width:36px;height:20px;border-radius:10px;background:#425af5;box-shadow:0 2px 5px rgba(0,0,0,0.05)"></div>
<div class="ab" style="left:342.5px;top:400.0px;width:16px;height:16px;border-radius:50%;background:#fff"></div>
<div class="ab t " style="left:403.5px;top:400.7px;font-size:13px;line-height:20px;color:#171717;letter-spacing:0.05px;-webkit-text-stroke:0.15px currentColor;">...12247321</div>
<div class="ab t " style="left:500px;top:400.7px;font-size:14px;line-height:20px;color:#171717;letter-spacing:0.25px;-webkit-text-stroke:0.15px currentColor;">ProjectX</div>
<div class="ab t " style="left:663.3px;top:400.7px;font-size:14px;line-height:20px;color:#171717;letter-spacing:0.1px;-webkit-text-stroke:0.15px currentColor;">S1OCT115514246</div>
<div class="ab t " style="left:863px;top:400.7px;font-size:14px;line-height:20px;color:#171717;letter-spacing:0.2px;-webkit-text-stroke:0.15px currentColor;">MNQZ5</div>
<div class="ab" style="left:953px;top:404.0px;width:14px;height:14px;color:#00c950"><svg width="14" height="14" viewBox="0 0 24 24" fill="none" stroke="currentColor" stroke-width="2.4" stroke-linecap="round" stroke-linejoin="round" ><path d="M6 15l6 -6l6 6"/></svg></div>
<div class="ab t " style="left:973px;top:400.7px;font-size:14px;line-height:20px;color:#00c950;letter-spacing:0.3px;-webkit-text-stroke:0.15px currentColor;">Long</div>
<div class="ab t " style="left:801.5px;width:600px;text-align:center;top:400.7px;font-size:14px;line-height:20px;color:#171717;letter-spacing:0.85px;-webkit-text-stroke:0.15px currentColor;">$49,669.11</div>
<div class="ab t " style="left:925px;width:600px;text-align:center;top:400.7px;font-size:14px;line-height:20px;color:#171717;letter-spacing:0.95px;-webkit-text-stroke:0.15px currentColor;">21248.50</div>
<div class="ab t " style="left:1037px;width:600px;text-align:center;top:400.7px;font-size:14px;line-height:20px;color:#00c950;letter-spacing:1.1px;-webkit-text-stroke:0.15px currentColor;">+$1564.40</div>
<div class="ab t " style="left:1149px;width:600px;text-align:center;top:400.7px;font-size:14px;line-height:20px;color:#00c950;letter-spacing:1.1px;-webkit-text-stroke:0.15px currentColor;">+$70548.00</div>
<div class="ab t " style="left:1239px;width:600px;text-align:center;top:400.7px;font-size:14px;line-height:20px;color:#171717;-webkit-text-stroke:0.15px currentColor;">12</div>
<div class="btn" style="left:1602px;top:397px;width:31px;height:27px;border-radius:7px"></div>
<div class="ab t " style="left:1317.5px;width:600px;text-align:center;top:400.3px;font-size:14px;line-height:20px;color:#171717;-webkit-text-stroke:0.3px currentColor;">1x</div>
<div class="ab" style="left:1671px;top:402px;width:16px;height:16px;border:1px solid #efefef;border-radius:4px;background:#fff"></div>
<div class="ab t " style="left:1695px;top:401.3px;font-size:12px;line-height:20px;color:#171717;letter-spacing:0.4px;-webkit-text-stroke:0.3px currentColor;">MNQZ5</div>
<div class="btn" style="left:1783.5px;top:394px;width:70px;height:32px"></div>
<div class="ab t " style="left:1796px;top:400.3px;font-size:14px;line-height:20px;color:#171717;letter-spacing:0.4px;-webkit-text-stroke:0.35px currentColor;">Flatten</div>
<div class="ab" style="left:287px;top:455.00px;width:5px;height:10px"><svg width="5" height="10" viewBox="0 0 5 10" fill="#7a7a7a"><rect x="0" y="0" width="2" height="2"/><rect x="3" y="0" width="2" height="2"/><rect x="0" y="3.5" width="2" height="2"/><rect x="3" y="3.5" width="2" height="2"/><rect x="0" y="7" width="2" height="2"/><rect x="3" y="7" width="2" height="2"/></svg></div>
<div class="ab" style="left:325px;top:447.3px;width:36px;height:20px;border-radius:10px;background:#425af5;box-shadow:0 2px 5px rgba(0,0,0,0.05)"></div>
<div class="ab" style="left:342.5px;top:449.0px;width:16px;height:16px;border-radius:50%;background:#fff"></div>
<div class="ab t " style="left:403.5px;top:449.7px;font-size:13px;line-height:20px;color:#171717;letter-spacing:0.05px;-webkit-text-stroke:0.15px currentColor;">...29070483</div>
<div class="ab t " style="left:500px;top:449.7px;font-size:14px;line-height:20px;color:#171717;letter-spacing:0.25px;-webkit-text-stroke:0.15px currentColor;">Tradovate</div>
<div class="ab t " style="left:663.3px;top:449.7px;font-size:14px;line-height:20px;color:#171717;letter-spacing:0.1px;-webkit-text-stroke:0.15px currentColor;">MFFUEVPRO201861007</div>
<div class="ab t " style="left:863px;top:449.7px;font-size:14px;line-height:20px;color:#171717;letter-spacing:0.2px;-webkit-text-stroke:0.15px currentColor;">MNQZ5</div>
<div class="ab" style="left:953px;top:453.0px;width:14px;height:14px;color:#00c950"><svg width="14" height="14" viewBox="0 0 24 24" fill="none" stroke="currentColor" stroke-width="2.4" stroke-linecap="round" stroke-linejoin="round" ><path d="M6 15l6 -6l6 6"/></svg></div>
<div class="ab t " style="left:973px;top:449.7px;font-size:14px;line-height:20px;color:#00c950;letter-spacing:0.3px;-webkit-text-stroke:0.15px currentColor;">Long</div>
<div class="ab t " style="left:801.5px;width:600px;text-align:center;top:449.7px;font-size:14px;line-height:20px;color:#171717;letter-spacing:0.85px;-webkit-text-stroke:0.15px currentColor;">$149,327.78</div>
<div class="ab t " style="left:925px;width:600px;text-align:center;top:449.7px;font-size:14px;line-height:20px;color:#171717;letter-spacing:0.95px;-webkit-text-stroke:0.15px currentColor;">21248.50</div>
<div class="ab t " style="left:1037px;width:600px;text-align:center;top:449.7px;font-size:14px;line-height:20px;color:#00c950;letter-spacing:1.1px;-webkit-text-stroke:0.15px currentColor;">+$1564.40</div>
<div class="ab t " style="left:1149px;width:600px;text-align:center;top:449.7px;font-size:14px;line-height:20px;color:#00c950;letter-spacing:1.1px;-webkit-text-stroke:0.15px currentColor;">+$70548.00</div>
<div class="ab t " style="left:1239px;width:600px;text-align:center;top:449.7px;font-size:14px;line-height:20px;color:#171717;-webkit-text-stroke:0.15px currentColor;">12</div>
<div class="btn" style="left:1602px;top:446px;width:31px;height:27px;border-radius:7px"></div>
<div class="ab t " style="left:1317.5px;width:600px;text-align:center;top:449.3px;font-size:14px;line-height:20px;color:#171717;-webkit-text-stroke:0.3px currentColor;">1x</div>
<div class="ab" style="left:1671px;top:451px;width:16px;height:16px;border:1px solid #efefef;border-radius:4px;background:#fff"></div>
<div class="ab t " style="left:1695px;top:450.3px;font-size:12px;line-height:20px;color:#171717;letter-spacing:0.4px;-webkit-text-stroke:0.3px currentColor;">MNQZ5</div>
<div class="btn" style="left:1783.5px;top:443px;width:70px;height:32px"></div>
<div class="ab t " style="left:1796px;top:449.3px;font-size:14px;line-height:20px;color:#171717;letter-spacing:0.4px;-webkit-text-stroke:0.35px currentColor;">Flatten</div>
<div class="ab" style="left:287px;top:504.00px;width:5px;height:10px"><svg width="5" height="10" viewBox="0 0 5 10" fill="#7a7a7a"><rect x="0" y="0" width="2" height="2"/><rect x="3" y="0" width="2" height="2"/><rect x="0" y="3.5" width="2" height="2"/><rect x="3" y="3.5" width="2" height="2"/><rect x="0" y="7" width="2" height="2"/><rect x="3" y="7" width="2" height="2"/></svg></div>
<div class="ab" style="left:325px;top:496.3px;width:36px;height:20px;border-radius:10px;background:#425af5;box-shadow:0 2px 5px rgba(0,0,0,0.05)"></div>
<div class="ab" style="left:342.5px;top:498.0px;width:16px;height:16px;border-radius:50%;background:#fff"></div>
<div class="ab t " style="left:403.5px;top:498.7px;font-size:13px;line-height:20px;color:#171717;letter-spacing:0.05px;-webkit-text-stroke:0.15px currentColor;">...29070494</div>
<div class="ab t " style="left:500px;top:498.7px;font-size:14px;line-height:20px;color:#171717;letter-spacing:0.25px;-webkit-text-stroke:0.15px currentColor;">Tradovate</div>
<div class="ab t " style="left:663.3px;top:498.7px;font-size:14px;line-height:20px;color:#171717;letter-spacing:0.1px;-webkit-text-stroke:0.15px currentColor;">MFFUEVPRO201861008</div>
<div class="ab t " style="left:863px;top:498.7px;font-size:14px;line-height:20px;color:#171717;letter-spacing:0.2px;-webkit-text-stroke:0.15px currentColor;">MNQZ5</div>
<div class="ab" style="left:953px;top:502.0px;width:14px;height:14px;color:#00c950"><svg width="14" height="14" viewBox="0 0 24 24" fill="none" stroke="currentColor" stroke-width="2.4" stroke-linecap="round" stroke-linejoin="round" ><path d="M6 15l6 -6l6 6"/></svg></div>
<div class="ab t " style="left:973px;top:498.7px;font-size:14px;line-height:20px;color:#00c950;letter-spacing:0.3px;-webkit-text-stroke:0.15px currentColor;">Long</div>
<div class="ab t " style="left:801.5px;width:600px;text-align:center;top:498.7px;font-size:14px;line-height:20px;color:#171717;letter-spacing:0.85px;-webkit-text-stroke:0.15px currentColor;">$149,125.90</div>
<div class="ab t " style="left:925px;width:600px;text-align:center;top:498.7px;font-size:14px;line-height:20px;color:#171717;letter-spacing:0.95px;-webkit-text-stroke:0.15px currentColor;">21248.50</div>
<div class="ab t " style="left:1037px;width:600px;text-align:center;top:498.7px;font-size:14px;line-height:20px;color:#00c950;letter-spacing:1.1px;-webkit-text-stroke:0.15px currentColor;">+$1564.40</div>
<div class="ab t " style="left:1149px;width:600px;text-align:center;top:498.7px;font-size:14px;line-height:20px;color:#00c950;letter-spacing:1.1px;-webkit-text-stroke:0.15px currentColor;">+$70548.00</div>
<div class="ab t " style="left:1239px;width:600px;text-align:center;top:498.7px;font-size:14px;line-height:20px;color:#171717;-webkit-text-stroke:0.15px currentColor;">12</div>
<div class="btn" style="left:1602px;top:495px;width:31px;height:27px;border-radius:7px"></div>
<div class="ab t " style="left:1317.5px;width:600px;text-align:center;top:498.3px;font-size:14px;line-height:20px;color:#171717;-webkit-text-stroke:0.3px currentColor;">1x</div>
<div class="ab" style="left:1671px;top:500px;width:16px;height:16px;border:1px solid #efefef;border-radius:4px;background:#fff"></div>
<div class="ab t " style="left:1695px;top:499.3px;font-size:12px;line-height:20px;color:#171717;letter-spacing:0.4px;-webkit-text-stroke:0.3px currentColor;">MNQZ5</div>
<div class="btn" style="left:1783.5px;top:492px;width:70px;height:32px"></div>
<div class="ab t " style="left:1796px;top:498.3px;font-size:14px;line-height:20px;color:#171717;letter-spacing:0.4px;-webkit-text-stroke:0.35px currentColor;">Flatten</div>
<div class="ab" style="left:243px;top:623px;width:1668px;height:4px;background:#e6e6e8"></div>
<div class="ab" style="left:1053px;top:623px;width:48px;height:4px;border-radius:2px;background:#c9c9c9"></div>
<div class="ab" style="left:259.5px;top:640px;width:362px;height:32px;background:#f4f4f4;border-radius:8px"></div>
<div class="ab" style="left:262px;top:642px;width:53px;height:28px;background:#fff;border-radius:6px;box-shadow:0 1px 2px rgba(0,0,0,0.12)"></div>
<div class="ab t " style="left:270.7px;top:646.0px;font-size:13px;line-height:20px;color:#171717;-webkit-text-stroke:0.35px currentColor;">All (0)</div>
<div class="ab t " style="left:323.5px;top:646.0px;font-size:13px;line-height:20px;color:#171717;-webkit-text-stroke:0.35px currentColor;">Open (0)</div>
<div class="ab t " style="left:393.2px;top:646.0px;font-size:13px;line-height:20px;color:#171717;-webkit-text-stroke:0.35px currentColor;">Filled (0)</div>
<div class="ab t " style="left:462.3px;top:646.0px;font-size:13px;line-height:20px;color:#171717;-webkit-text-stroke:0.35px currentColor;">Canceled (0)</div>
<div class="ab t " style="left:555.3px;top:646.0px;font-size:13px;line-height:20px;color:#171717;-webkit-text-stroke:0.35px currentColor;">Failed (0)</div>
<div class="btn" style="left:1810px;top:640px;width:86px;height:32px"></div>
<div class="ab" style="left:1819.3px;top:647.2px;width:18px;height:18px;color:#171717"><svg width="18" height="18" viewBox="0 0 24 24" fill="none" stroke="currentColor" stroke-width="1.9" stroke-linecap="round" stroke-linejoin="round" ><path d="M14 3v4a1 1 0 0 0 1 1h4"/><path d="M17 21h-10a2 2 0 0 1 -2 -2v-14a2 2 0 0 1 2 -2h7l5 5v11a2 2 0 0 1 -2 2z"/><path d="M12 17v-6"/><path d="M9.5 14.5l2.5 2.5l2.5 -2.5"/></svg></div>
<div class="ab t " style="left:1846px;top:646.0px;font-size:13px;line-height:20px;color:#171717;letter-spacing:0.2px;-webkit-text-stroke:0.35px currentColor;">Export</div>
<div class="ab" style="left:243px;top:684px;width:1668px;height:1px;background:#ececec"></div>
<div class="ab" style="left:243px;top:724px;width:1668px;height:1px;background:#ececec"></div>
<div class="ab t " style="left:259.3px;top:695.0px;font-size:14px;line-height:20px;color:#171717;letter-spacing:0.35px;-webkit-text-stroke:0.35px currentColor;">ID</div>
<div class="ab t " style="left:405.5px;top:695.0px;font-size:14px;line-height:20px;color:#171717;letter-spacing:0.35px;-webkit-text-stroke:0.35px currentColor;">Connection</div>
<div class="ab t " style="left:559.3px;top:695.0px;font-size:14px;line-height:20px;color:#171717;letter-spacing:0.35px;-webkit-text-stroke:0.35px currentColor;">Account</div>
<div class="ab t " style="left:765px;top:695.0px;font-size:14px;line-height:20px;color:#171717;letter-spacing:0.35px;-webkit-text-stroke:0.35px currentColor;">Time</div>
<div class="ab t " style="left:944px;top:695.0px;font-size:14px;line-height:20px;color:#171717;letter-spacing:0.35px;-webkit-text-stroke:0.35px currentColor;">Contract</div>
<div class="ab t " style="left:1098px;top:695.0px;font-size:14px;line-height:20px;color:#171717;letter-spacing:0.35px;-webkit-text-stroke:0.35px currentColor;">Type</div>
<div class="ab t " style="left:1252px;top:695.0px;font-size:14px;line-height:20px;color:#171717;letter-spacing:0.35px;-webkit-text-stroke:0.35px currentColor;">Side</div>
<div class="ab t " style="left:1406px;top:695.0px;font-size:14px;line-height:20px;color:#171717;letter-spacing:0.35px;-webkit-text-stroke:0.35px currentColor;">Qty</div>
<div class="ab t " style="left:1560px;top:695.0px;font-size:14px;line-height:20px;color:#171717;letter-spacing:0.35px;-webkit-text-stroke:0.35px currentColor;">Price</div>
<div class="ab t " style="right:24px;top:695.0px;font-size:14px;line-height:20px;color:#171717;text-align:right;letter-spacing:0.35px;-webkit-text-stroke:0.35px currentColor;">Status</div>
<div class="ab" style="left:851px;top:839px;width:48px;height:48px;background:#f7f7f7;border-radius:8px"></div>
<div class="ab" style="left:862.75px;top:850.75px;width:24px;height:24px;color:#666666"><svg width="24" height="24" viewBox="0 0 24 24" fill="none" stroke="currentColor" stroke-width="2" stroke-linecap="round" stroke-linejoin="round" ><polyline points="22 12 16 12 14 15 10 15 8 12 2 12"/><path d="M5.45 5.11 2 12v6a2 2 0 0 0 2 2h16a2 2 0 0 0 2-2v-6l-3.45-6.89A2 2 0 0 0 16.76 4H7.24a2 2 0 0 0-1.79 1.11z"/></svg></div>
<div class="ab t " style="left:851.5px;top:906.0px;font-size:18px;line-height:20px;color:#171717;font-weight:700;letter-spacing:0.55px;">No order history available</div>
<div class="ab" style="left:1512px;top:856px;width:391px;height:120px;background:#fff;border:1px solid #ececec;border-radius:12px;box-shadow:0 4px 14px rgba(0,0,0,0.06)"></div>
<div class="ab" style="left:1880px;top:870px;width:11px;height:11px;color:#525252"><svg width="11" height="11" viewBox="0 0 24 24" fill="none" stroke="currentColor" stroke-width="2" stroke-linecap="round" stroke-linejoin="round" ><path d="M18 6l-12 12"/><path d="M6 6l12 12"/></svg></div>
<div class="ab" style="left:1527.5px;top:881.5px;width:49px;height:49px;border-radius:12px;background:#f9f9fa"></div>
<div class="ab" style="left:1527px;top:880px;width:50px;height:36px;overflow:hidden"><svg width="50" height="50" viewBox="0 0 50 50"><polygon points="23.5,6.5 41,6.5 43.5,9 43.5,25 20,48 5,33 5,25" fill="#f5c531"/><polygon points="43.5,9 44.8,10.5 44.8,26 21.3,49.5 20,48 43.5,25" fill="#c98b10"/><circle cx="36.5" cy="13.6" r="2.4" fill="#fff"/><path d="M33.6 12.2 A3 3 0 0 1 36 10.4" stroke="#c98b10" stroke-width="1" fill="none"/><path d="M16 25.5 L28.5 13.4" stroke="#c98b10" stroke-width="1.3"/><path d="M31 19.5 L35 19.2" stroke="#c98b10" stroke-width="1"/><path d="M19.5 28 L16.5 36" stroke="#c98b10" stroke-width="1.2" stroke-dasharray="2 1"/><g fill="#fff"><circle cx="21.5" cy="9.5" r=".5"/><circle cx="24.5" cy="9.5" r=".5"/><circle cx="19.5" cy="12" r=".5"/><circle cx="17" cy="14" r=".5"/><circle cx="15" cy="16.5" r=".5"/><circle cx="12.5" cy="19" r=".5"/><circle cx="10" cy="21.5" r=".5"/><circle cx="7" cy="26.5" r=".5"/></g></svg></div>
<div class="ab t " style="left:1589px;top:878.7px;font-size:14px;line-height:20px;color:#171717;letter-spacing:0.3px;-webkit-text-stroke:0.35px currentColor;">Alpha Futures</div>
<div class="ab" style="left:1589px;top:903px;width:81px;height:24px;background:#f0f0f0;border-radius:6px"></div>
<div class="ab t " style="left:1598px;top:906.5px;font-size:14px;line-height:20px;color:#00c950;font-weight:700;letter-spacing:0.2px;">25% OFF</div>
<div class="ab" style="left:1677px;top:911px;width:12px;height:12px"><svg width="12" height="12" viewBox="0 0 24 24" fill="none" stroke="#a8a8a8" stroke-width="2.2" stroke-linecap="round"><circle cx="12" cy="13" r="8"/><path d="M12 9v4l2 2"/><path d="M10 2h4"/></svg></div>
<div class="ab t " style="left:1692px;top:907.5px;font-size:13px;line-height:20px;color:#a8a8a8;letter-spacing:0.2px;-webkit-text-stroke:0.15px currentColor;">2d 12h 53m</div>
<div class="btn" style="left:1758px;top:891px;width:128px;height:40px"></div>
<div class="ab" style="left:1768px;top:897px;width:16px;height:16px;color:#171717"><svg width="16" height="16" viewBox="0 0 24 24" fill="none" stroke="currentColor" stroke-width="2" stroke-linecap="round" stroke-linejoin="round" ><path d="M12 6h-6a2 2 0 0 0 -2 2v10a2 2 0 0 0 2 2h10a2 2 0 0 0 2 -2v-6"/><path d="M11 13l9 -9"/><path d="M15 4h5v5"/></svg></div>
<div class="ab t " style="left:1795px;top:895.0px;font-size:14px;line-height:20px;color:#171717;letter-spacing:0.35px;-webkit-text-stroke:0.35px currentColor;">Code: SYNC</div>
<div class="ab" style="left:828px;top:15px;width:264px;height:49px;background:#fff;border:1.2px solid #7d8ff8;border-radius:13px;box-shadow:0 4px 10px rgba(0,0,0,0.07)"></div>
<div class="ab" style="left:843px;top:31px;width:20px;height:20px"><svg width="20" height="20" viewBox="0 0 20 20" fill="none" stroke="#425af5" stroke-width="1.7" stroke-linecap="round"><path d="M15.24 10.55 A6 6 0 1 0 7.06 13.94"/></svg></div>
<div class="ab t " style="left:869px;top:29.9px;font-size:14px;line-height:20px;color:#171717;letter-spacing:0.33px;-webkit-text-stroke:0.35px currentColor;">7 Positions Running</div>
<div class="ab" style="left:1014.5px;top:38.5px;width:3px;height:3px;border-radius:50%;background:#737373"></div>
<div class="ab t " style="left:1032px;top:30.1px;font-size:12px;line-height:20px;color:#737373;letter-spacing:0.5px;-webkit-text-stroke:0.15px currentColor;">MNQZ5</div>
</div></body></html>
